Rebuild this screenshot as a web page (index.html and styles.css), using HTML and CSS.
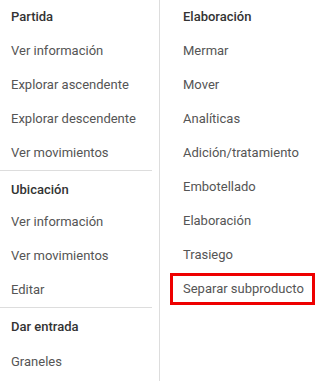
FILE: index.html
```html
<!DOCTYPE html>
<html lang="es">
<head>
    <meta charset="UTF-8">
    <meta name="viewport" content="width=device-width, initial-scale=1.0">
    <title>Menú</title>
    <link rel="stylesheet" href="styles.css">
</head>
<body>
    <div class="menu">
        <div class="col col-left">
            <div class="section">
                <div class="title">Partida</div>
                <div class="item">Ver información</div>
                <div class="item">Explorar ascendente</div>
                <div class="item">Explorar descendente</div>
                <div class="item">Ver movimientos</div>
            </div>
            <div class="sep"></div>
            <div class="section">
                <div class="title">Ubicación</div>
                <div class="item">Ver información</div>
                <div class="item">Ver movimientos</div>
                <div class="item">Editar</div>
            </div>
            <div class="sep"></div>
            <div class="section last">
                <div class="title">Dar entrada</div>
                <div class="item">Graneles</div>
            </div>
        </div>
        <div class="col col-right">
            <div class="section">
                <div class="title">Elaboración</div>
                <div class="item">Mermar</div>
                <div class="item">Mover</div>
                <div class="item">Analíticas</div>
                <div class="item">Adición/tratamiento</div>
                <div class="item">Embotellado</div>
                <div class="item">Elaboración</div>
                <div class="item">Trasiego</div>
                <div class="item selected">Separar subproducto</div>
            </div>
        </div>
    </div>
</body>
</html>
```

FILE: styles.css
```css
body {
    margin: 0;
    background-color: #fff;
    font-family: Roboto, "Liberation Sans", Arial, sans-serif;
    font-size: 13px;
}

.menu {
    display: flex;
    height: 381px;
}

.col {
    display: flex;
    flex-direction: column;
}

.col-left {
    width: 159px;
    border-right: 1px solid #ddd;
}

.col-right {
    flex: 1;
    padding-left: 10px;
    padding-right: 6px;
}

.title,
.item {
    height: 34px;
    line-height: 34px;
    white-space: nowrap;
}

.col-left .title,
.col-left .item {
    padding-left: 11px;
}

.col-right .title,
.col-right .item {
    padding-left: 13px;
}

.title {
    color: #333;
    font-weight: 500;
}

.item {
    color: #555;
}

.sep {
    height: 1px;
    background-color: #ddd;
    margin-right: 7px;
}

/* titles right under a separator sit a bit lower */
.sep + .section .title {
    height: 30px;
    line-height: 30px;
    padding-top: 4px;
}

.section.last .item {
    margin-top: 3px;
}

.col-right .item.selected {
    border: 3px solid #e00;
    height: 26px;
    line-height: 26px;
    padding-left: 10px;
    margin-top: 1px;
}
```
